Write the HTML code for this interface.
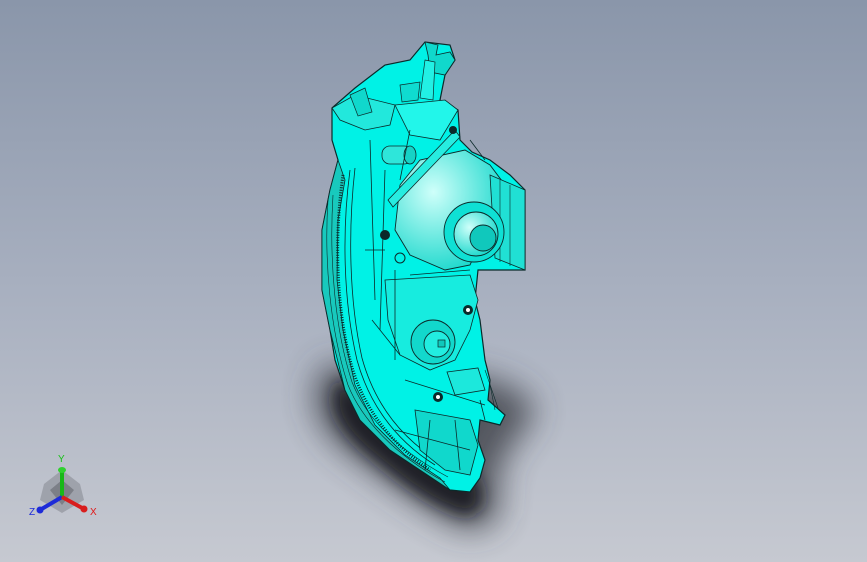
<!DOCTYPE html>
<html><head><meta charset="utf-8"><style>
html,body{margin:0;padding:0;width:867px;height:562px;overflow:hidden}
body{background:linear-gradient(180deg,#8a96aa 0%,#a7afbf 50%,#c6c9d1 100%)}
svg{position:absolute;left:0;top:0}
</style></head><body>
<svg width="867" height="562" viewBox="0 0 867 562">
<defs>
<filter id="b" x="-50%" y="-50%" width="200%" height="200%"><feGaussianBlur stdDeviation="16"/></filter>
<filter id="b2" x="-50%" y="-50%" width="200%" height="200%"><feGaussianBlur stdDeviation="8"/></filter>
<radialGradient id="lg" cx="0.35" cy="0.35" r="0.7"><stop offset="0" stop-color="#cffffa"/><stop offset="1" stop-color="#1ad8cc"/></radialGradient>
</defs>
<!-- shadow -->
<path d="M325 365 C305 395 315 425 345 450 C385 480 425 510 460 528 C490 535 505 515 498 490 C495 465 515 440 535 415 C535 395 505 380 470 375 Z" fill="#3a3d44" filter="url(#b)" opacity="0.8"/>
<path d="M340 380 C325 405 340 430 370 455 C400 480 430 505 465 515 C485 512 485 495 475 475 Z" fill="#15171b" filter="url(#b2)" opacity="0.85"/>
<!-- body -->
<path d="M332 108 L355 88 L385 65 L410 60 L425 42 L450 45 L455 60 L445 75 L440 100 L458 110 L460 140 L472 152 L490 160 L510 175 L525 190 L525 270 L520 270 L478 270 L475 300 L480 320 L485 360 L490 380 L488 400 L505 415 L500 425 L480 420 L478 440 L485 460 L480 478 L470 492 L450 490 L420 470 L390 450 L360 420 L345 390 L335 360 L330 330 L322 290 L322 230 L330 190 L338 160 L332 140 Z" fill="#00f2e6" stroke="#0b2a2a" stroke-width="1.2"/>
<path d="M338 160 L330 190 L322 230 L322 290 L330 330 L345 390 L360 420 L390 450 L420 470 L450 490 L440 478 L405 455 L375 425 L355 385 L343 330 L337 280 L338 220 L345 180 Z" fill="#18c9bd" stroke="#0b2a2a" stroke-width="0.8"/>
<path d="M343 175 C335 230 335 300 350 360 C360 400 385 440 430 470" fill="none" stroke="#0b2a2a" stroke-width="3" stroke-dasharray="1 1.5"/>
<path d="M350 170 C342 230 343 300 357 360 C368 400 392 438 435 465" fill="none" stroke="#0b2a2a" stroke-width="0.8"/>
<path d="M355 168 C348 230 349 300 362 358 C373 398 396 435 440 462" fill="none" stroke="#0b2a2a" stroke-width="0.8"/>
<path d="M328 200 C324 260 330 330 348 385 C362 420 395 455 445 482" fill="none" stroke="#0b2a2a" stroke-width="0.6"/>
<path d="M333 195 C329 260 335 330 352 382 C366 418 398 450 448 477" fill="none" stroke="#0b2a2a" stroke-width="0.6"/>
<!-- top blocks -->
<path d="M332 108 L355 95 L395 105 L390 125 L365 130 L340 120 Z" fill="#22e8dc" stroke="#0b2a2a" stroke-width="0.8"/>
<path d="M350 95 L365 88 L372 112 L358 116 Z" fill="#10d8cc" stroke="#0b2a2a" stroke-width="0.7"/>
<path d="M425 42 L438 45 L436 55 L450 52 L455 60 L445 75 L430 72 L428 55 Z" fill="#10d8cc" stroke="#0b2a2a" stroke-width="0.8"/>
<path d="M425 60 L435 62 L433 100 L420 98 Z" fill="#22f0e4" stroke="#0b2a2a" stroke-width="0.7"/>
<path d="M395 105 L445 100 L458 110 L440 140 L410 135 Z" fill="#22f6ea" stroke="#0b2a2a" stroke-width="0.8"/>
<path d="M400 85 L420 82 L418 100 L402 102 Z" fill="#0fdcd0" stroke="#0b2a2a" stroke-width="0.7"/>
<!-- top cylinder -->
<rect x="382" y="146" width="30" height="18" rx="8" fill="#2ee6da" stroke="#0b2a2a" stroke-width="0.8"/>
<ellipse cx="410" cy="155" rx="6" ry="9" fill="#16d2c6" stroke="#0b2a2a" stroke-width="0.8"/>
<!-- lamp body -->
<path d="M400 185 L420 160 L465 150 L490 165 L505 185 L495 210 L470 265 L445 270 L410 255 L395 230 Z" fill="url(#lg)" stroke="#0b2a2a" stroke-width="0.9"/>
<path d="M490 175 L525 190 L525 270 L495 258 Z" fill="#20e0d4" stroke="#0b2a2a" stroke-width="0.8"/>
<path d="M500 180 L500 262 M510 185 L510 266" stroke="#0b2a2a" stroke-width="0.6"/>
<circle cx="474" cy="232" r="30" fill="#0fe0d4" stroke="#0b2a2a" stroke-width="0.9"/>
<circle cx="476" cy="234" r="22" fill="url(#lg)" stroke="#0b2a2a" stroke-width="0.9"/>
<circle cx="483" cy="238" r="13" fill="#10c8bc" stroke="#0b2a2a" stroke-width="0.9"/>
<path d="M388 200 L455 130 L460 137 L393 207 Z" fill="#27ece0" stroke="#0b2a2a" stroke-width="0.8"/>
<circle cx="453" cy="130" r="4" fill="#0b2a2a"/>
<circle cx="385" cy="235" r="5" fill="#0b2a2a"/>
<circle cx="400" cy="258" r="5" fill="none" stroke="#0b2a2a"/>
<!-- mid section -->
<path d="M385 280 L470 275 L478 300 L470 330 L455 360 L430 370 L400 355 L388 320 Z" fill="#17ecdf" stroke="#0b2a2a" stroke-width="0.8"/>
<circle cx="433" cy="342" r="22" fill="#12d8cc" stroke="#0b2a2a" stroke-width="0.9"/>
<circle cx="437" cy="344" r="13" fill="#22ede0" stroke="#0b2a2a" stroke-width="0.9"/>
<rect x="438" y="340" width="7" height="7" fill="#10c8bc" stroke="#0b2a2a" stroke-width="0.7"/>
<circle cx="468" cy="310" r="5" fill="#0b2a2a"/><circle cx="468" cy="310" r="2" fill="#fff"/>
<circle cx="438" cy="397" r="5" fill="#0b2a2a"/><circle cx="438" cy="397" r="2" fill="#fff"/>
<path d="M447 372 L478 368 L485 390 L455 395 Z" fill="#1ce8dc" stroke="#0b2a2a" stroke-width="0.8"/>
<path d="M415 410 L470 420 L478 445 L470 475 L445 470 L420 450 Z" fill="#10d8cc" stroke="#0b2a2a" stroke-width="0.8"/>
<path d="M385 170 L380 330 M410 275 L470 270 M405 380 L485 405 M395 430 L470 450 M370 140 L375 300 M395 270 L395 360 M410 130 L400 180 M480 400 L485 420 M455 420 L460 470 M372 320 L400 355 M365 250 L385 250 M470 140 L485 160 M430 420 L425 470" stroke="#0b2a2a" stroke-width="0.8" fill="none"/>
<path d="M490 385 L495 410 M485 370 L498 408" stroke="#0b2a2a" stroke-width="0.6"/>
<!-- triad -->
<path d="M62 470 L44 484 L40 500 L62 513 L84 500 L80 484 Z" fill="#888c94" opacity="0.6"/>
<path d="M62 480 L50 490 L62 505 L74 490 Z" fill="#6d7078" opacity="0.7"/>
<line x1="62" y1="497" x2="62" y2="470" stroke="#18b818" stroke-width="4"/>
<ellipse cx="62" cy="470" rx="4" ry="3" fill="#30d030"/>
<line x1="62" y1="497" x2="40" y2="510" stroke="#1d2bd8" stroke-width="4"/>
<circle cx="40" cy="510" r="3.5" fill="#1d2bd8"/>
<line x1="62" y1="497" x2="84" y2="509" stroke="#d81d1d" stroke-width="4"/>
<circle cx="84" cy="509" r="3.5" fill="#d81d1d"/>
<text x="58" y="462" font-family="Liberation Sans,sans-serif" font-size="10" fill="#18c018">Y</text>
<text x="29" y="515" font-family="Liberation Sans,sans-serif" font-size="10" fill="#1d2bd8">Z</text>
<text x="90" y="515" font-family="Liberation Sans,sans-serif" font-size="10" fill="#e01818">X</text>
</svg>
</body></html>
